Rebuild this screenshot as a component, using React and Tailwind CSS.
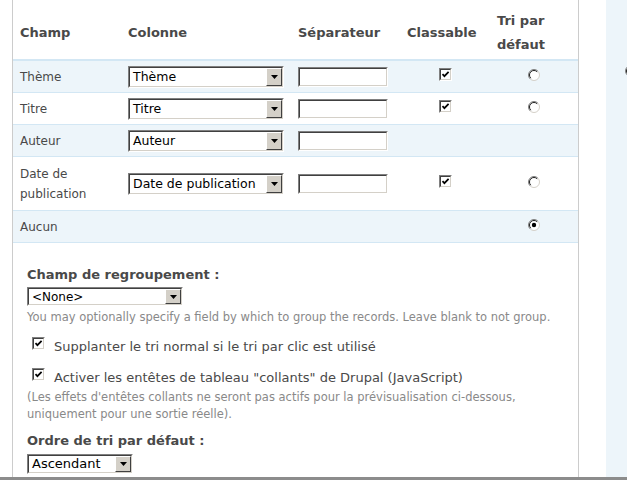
import React from 'react';

const Sunken = ({ className, children }) => (
  <div className={`border border-t-[#808080] border-l-[#808080] border-b-white border-r-white ${className}`}>
    <div className="flex h-full w-full bg-white border border-t-[#404040] border-l-[#404040] border-b-[#d4d0c8] border-r-[#d4d0c8]">
      {children}
    </div>
  </div>
);

const Select = ({ value, className, text = 'text-[12.5px]' }) => (
  <Sunken className={className}>
    <span className={`flex-1 flex items-center pl-[3px] overflow-hidden whitespace-nowrap text-[#000] ${text}`}>{value}</span>
    <span className="w-[16px] flex items-center justify-center bg-[#d4d0c8] border border-t-[#ffffff] border-l-[#ffffff] border-b-[#404040] border-r-[#404040]">
      <svg width="7" height="4" viewBox="0 0 7 4">
        <path d="M0 0H7L3.5 4Z" fill="#000" />
      </svg>
    </span>
  </Sunken>
);

const Checkbox = ({ className = '' }) => (
  <Sunken className={`w-[13px] h-[13px] shrink-0 ${className}`}>
    <svg width="9" height="9" viewBox="0 0 9 9" className="m-auto">
      <path d="M1.5 4.2L3.4 6.2L7.6 1.8" fill="none" stroke="#000" strokeWidth="1.7" />
    </svg>
  </Sunken>
);

const Radio = ({ checked, className = '' }) => (
  <svg width="12" height="12" viewBox="0 0 12 12" className={className}>
    <circle cx="6" cy="6" r="5" fill="#fff" />
    <path d="M9.9 2.1A5.5 5.5 0 0 0 2.1 9.9" fill="none" stroke="#808080" strokeWidth="1" />
    <path d="M9.2 2.8A4.5 4.5 0 0 0 2.8 9.2" fill="none" stroke="#202020" strokeWidth="1" />
    <path d="M2.1 9.9A5.5 5.5 0 0 0 9.9 2.1" fill="none" stroke="#d4d0c8" strokeWidth="1" />
    {checked && <circle cx="6" cy="6" r="2.2" fill="#000" />}
  </svg>
);

const rows = [
  { champ: 'Thème', col: 'Thème', sep: true, sort: true, radio: true, bg: 'bg-[#edf5fa]', h: 'h-[32px]' },
  { champ: 'Titre', col: 'Titre', sep: true, sort: true, radio: true, bg: 'bg-white', h: 'h-[32px]' },
  { champ: 'Auteur', col: 'Auteur', sep: true, sort: false, radio: false, bg: 'bg-[#edf5fa]', h: 'h-[32px]' },
  { champ: 'Date de publication', col: 'Date de publication', sep: true, sort: true, radio: true, bg: 'bg-white', h: 'h-[54px]' },
  { champ: 'Aucun', col: null, sep: false, sort: false, radio: true, checked: true, bg: 'bg-[#edf5fa]', h: 'h-[32px]' },
];

const grid = 'grid grid-cols-[108px_170px_109px_90px_88px]';

export default function App() {
  return (
    <div className="w-[640px] h-[480px] bg-white overflow-hidden font-['DejaVu_Sans',sans-serif] text-[#494949]">
      <div className="flex h-[477px]">
        <div className="ml-[12px] w-[567px] border-x border-[#cccccc] flex flex-col">
          {/* table header */}
          <div className={`${grid} h-[61px] items-center pt-[9px] pb-[2px] border-b-2 border-[#d3e7f4] text-[13px] font-bold leading-[24px]`}>
            <div className="px-[7px]">Champ</div>
            <div className="px-[7px]">Colonne</div>
            <div className="px-[7px]">Séparateur</div>
            <div className="px-[7px]">Classable</div>
            <div className="px-[7px]">Tri par<br />défaut</div>
          </div>

          {rows.map((r) => (
            <div key={r.champ} className={`${grid} ${r.h} ${r.bg} items-center border-b border-[#d3e7f4] text-[12px] leading-[20px]`}>
              <div className="px-[7px] max-w-[100px]">{r.champ}</div>
              <div className="px-[7px]">
                {r.col && <Select value={r.col} className="w-[156px] h-[22px]" />}
              </div>
              <div className="px-[7px]">
                {r.sep && <Sunken className="w-[90px] h-[20px]" />}
              </div>
              <div className="flex justify-center">
                {r.sort && <Checkbox className="mb-[5px]" />}
              </div>
              <div className="flex justify-center">
                {r.radio && <Radio checked={r.checked} className="mb-[4px]" />}
              </div>
            </div>
          ))}

          {/* options */}
          <div className="px-[14px] flex flex-col items-start">
            <div className="mt-[23px] text-[13px] font-bold leading-[18px]">Champ de regroupement :</div>
            <Select value="<None>" className="mt-[3px] w-[156px] h-[19px]" text="text-[12px]" />
            <div className="mt-[3px] text-[11.5px] leading-[16px] text-[#898989] whitespace-nowrap">
              You may optionally specify a field by which to group the records. Leave blank to not group.
            </div>

            <div className="mt-[12px] flex items-start gap-[9px] pl-[5px] text-[13px] leading-[20px]">
              <Checkbox />
              <span>Supplanter le tri normal si le tri par clic est utilisé</span>
            </div>
            <div className="mt-[11px] flex items-start gap-[9px] pl-[5px] text-[13px] leading-[20px]">
              <Checkbox />
              <span>Activer les entêtes de tableau "collants" de Drupal (JavaScript)</span>
            </div>
            <div className="mt-[1px] text-[11.5px] leading-[17px] text-[#898989] whitespace-nowrap">
              (Les effets d'entêtes collants ne seront pas actifs pour la prévisualisation ci-dessous,
              <br />
              uniquement pour une sortie réelle).
            </div>

            <div className="mt-[9px] text-[13px] font-bold leading-[18px]">Ordre de tri par défaut :</div>
            <Select value="Ascendant" className="mt-[4px] w-[106px] h-[20px]" text="text-[13px]" />
          </div>
        </div>

        <div className="ml-[27px] w-[21px] bg-[#edf5fa] overflow-hidden pt-[65px] pl-[19px]">
          <Radio />
        </div>
      </div>
      <div className="w-[627px] h-[3px] bg-[#8c8c8c]" />
    </div>
  );
}
